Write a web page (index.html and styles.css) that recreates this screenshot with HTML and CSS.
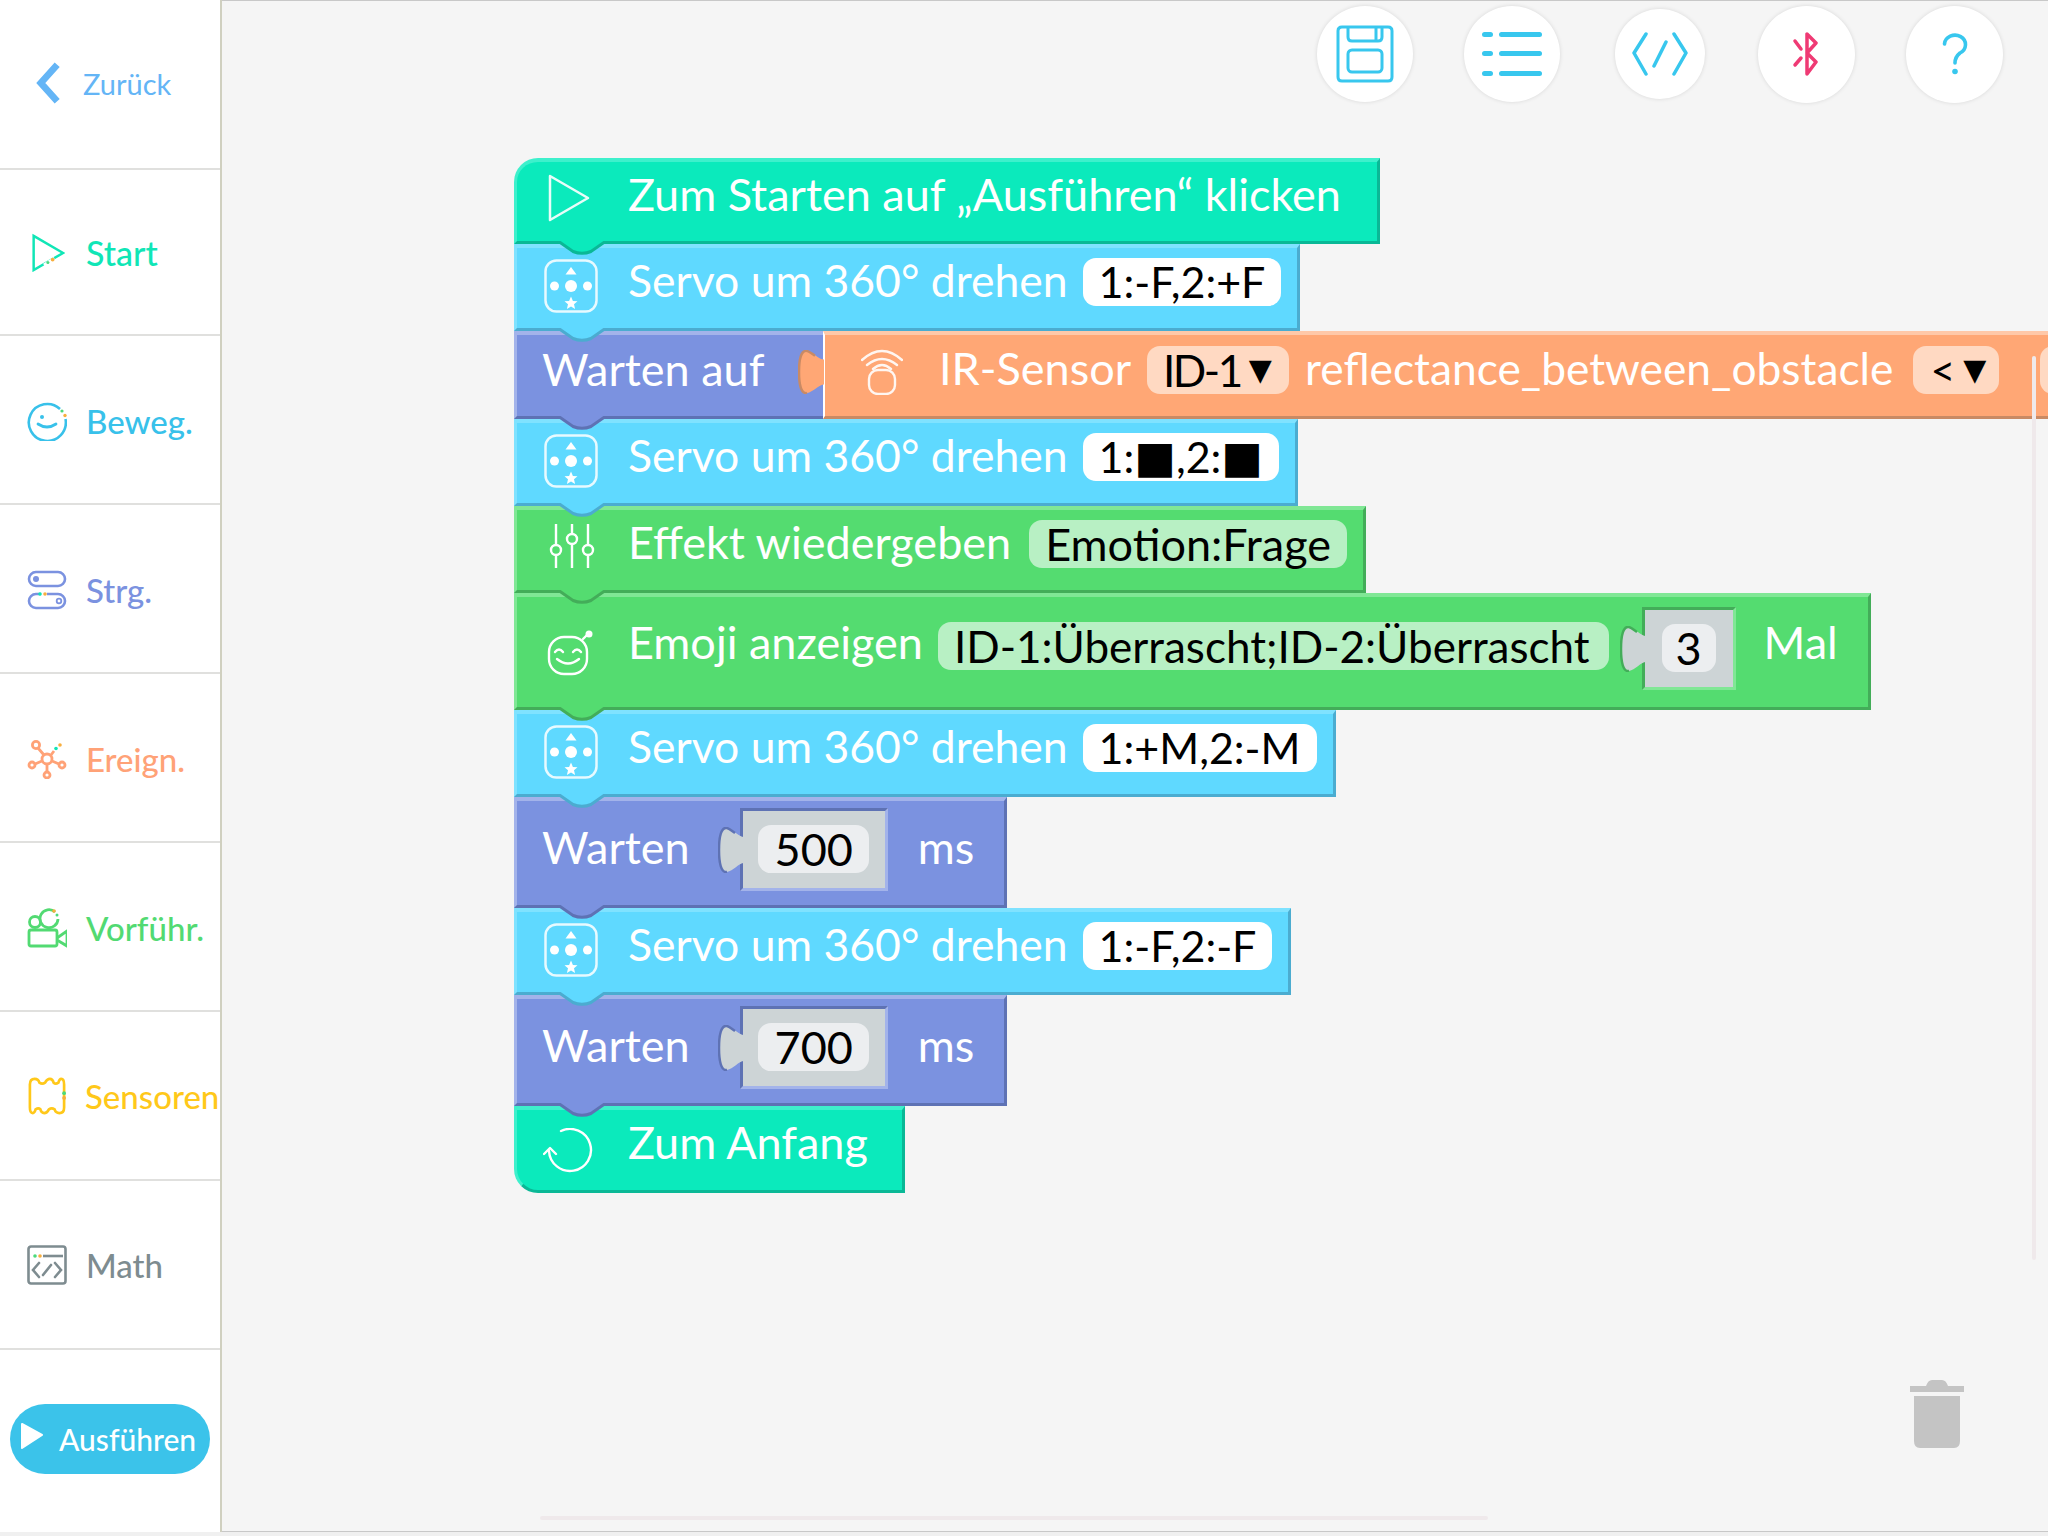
FILE: index.html
```html
<!DOCTYPE html>
<html lang="de">
<head>
    <meta charset="UTF-8">
    <title>Blöcke</title>
    <link rel="stylesheet" href="styles.css">
</head>
<body>
    <svg class="defs" width="0" height="0">
        <symbol id="notch" viewBox="0 0 48 14">
            <path class="notch-fill" d="M0 0H48L33 10.5Q24 14 15 10.5Z"/>
            <path class="notch-edge" d="M0 0L15 10.5Q24 14 33 10.5L48 0"/>
        </symbol>
        <symbol id="servo" viewBox="0 0 54 54">
            <rect x="1.5" y="1.5" width="51" height="51" rx="11" fill="none" stroke="#fff" stroke-width="2.5" opacity=".85"/>
            <circle cx="27" cy="27" r="6" fill="#fff"/>
            <circle cx="10.5" cy="27" r="4.5" fill="#fff"/>
            <circle cx="43.5" cy="27" r="4.5" fill="#fff"/>
            <path d="M27 8L32.5 15.5H21.5Z" fill="#fff"/>
            <path d="M27 37.5l1.9 4.4 4.6.4-3.5 3 1.1 4.6-4.1-2.5-4.1 2.5 1.1-4.6-3.5-3 4.6-.4Z" fill="#fff"/>
        </symbol>
        <symbol id="socket-shape" viewBox="0 0 26 46" preserveAspectRatio="none">
            <path class="socket-fill" d="M26 10C21 10 15 2 9 1C3 0 1 10 1 23S3 46 9 45C15 44 21 36 26 36Z"/>
            <path class="socket-edge" d="M17 6C14 4 12 2 9 1C3 0 1 10 1 23S3 46 9 45"/>
        </symbol>
    </svg>

    <div class="app">
        <aside class="sidebar">
            <div class="side-item side-back">
                <svg class="back-icon" viewBox="0 0 28 46"><path d="M23 4L6 23L23 42" fill="none" stroke="#64b5f6" stroke-width="7" stroke-linejoin="miter"/></svg>
                <span>Zurück</span>
            </div>
            <div class="side-item side-start">
                <svg class="side-icon" viewBox="0 0 40 40"><path d="M7 3L38 21L7 39Z" fill="none" stroke="#10e6b6" stroke-width="2.6"/><path d="M18 34l11-7" stroke="#fff" stroke-width="4"/><circle cx="27" cy="28" r="2" fill="#f7ae3e"/><circle cx="22" cy="31" r="1.6" fill="#4cd97b"/></svg>
                <span>Start</span>
            </div>
            <div class="side-item side-move">
                <svg class="side-icon" viewBox="0 0 40 40"><path d="M33 8A18.5 18.5 0 1 0 38.5 18" fill="none" stroke="#38c1ea" stroke-width="2.6"/><circle cx="15" cy="16" r="2" fill="#38c1ea"/><path d="M11 23Q20 29 29 23" fill="none" stroke="#38c1ea" stroke-width="2.8" stroke-linecap="round"/><circle cx="35" cy="10" r="1.6" fill="#4cd97b"/><circle cx="38" cy="14.500" r="1.7" fill="#f7ae3e"/></svg>
                <span>Beweg.</span>
            </div>
            <div class="side-item side-ctrl">
                <svg class="side-icon" viewBox="0 0 40 40"><rect x="2" y="2" width="36" height="14" rx="7" fill="none" stroke="#7b92e0" stroke-width="2.6"/><circle cx="9" cy="9" r="3" fill="#7b92e0"/><path d="M14 24H9A7 7 0 0 0 9 38H31A7 7 0 0 0 31 24H20" fill="none" stroke="#7b92e0" stroke-width="2.6"/><circle cx="32" cy="31" r="2.300" fill="none" stroke="#7b92e0" stroke-width="1.8"/><circle cx="13" cy="24" r="1.800" fill="#10e6b6"/><circle cx="18" cy="24" r="1.800" fill="#f7ae3e"/></svg>
                <span>Strg.</span>
            </div>
            <div class="side-item side-event">
                <svg class="side-icon" viewBox="0 0 40 40" fill="none" stroke="#ffa277" stroke-width="2.800"><circle cx="20" cy="20" r="5"/><circle cx="9" cy="6" r="3.600"/><circle cx="5" cy="26" r="3"/><circle cx="35" cy="26" r="3"/><circle cx="20" cy="36" r="3"/><path d="M11 9L17 16M8 25L15 22M32 25L25 22M20 25V33M24 16L27 12"/><circle cx="29" cy="9.500" r="1.800" fill="#10e6b6" stroke="none"/><circle cx="33" cy="6" r="1.800" fill="#f7ae3e" stroke="none"/></svg>
                <span>Ereign.</span>
            </div>
            <div class="side-item side-show">
                <svg class="side-icon" viewBox="0 0 40 40" fill="none" stroke="#52da72" stroke-width="2.800"><rect x="2" y="22" width="28" height="16" rx="2"/><circle cx="8" cy="14" r="5.500"/><path d="M28 4A9 9 0 1 0 31 11"/><path d="M30 30L40 23V38L30 32"/><circle cx="27" cy="3" r="1.800" fill="#f7ae3e" stroke="none"/><circle cx="30" cy="7" r="1.500" fill="#4cd97b" stroke="none"/></svg>
                <span>Vorführ.</span>
            </div>
            <div class="side-item side-sensor">
                <svg class="side-icon" viewBox="0 0 40 40" fill="none" stroke="#ffc81a" stroke-width="2.800"><path d="M2 8Q2 2 7 2Q11 2 12 6Q15 8 18 6Q20 2 23 2Q26 2 27 6Q29 8 32 6Q33 2 35 2Q38 2 38 8V32Q38 38 33 38Q29 38 28 34Q25 32 22 34Q20 38 17 38Q14 38 13 34Q11 32 8 34Q7 38 5 38Q2 38 2 32Z"/><circle cx="38" cy="17" r="2" fill="#4cd97b" stroke="none"/><circle cx="38" cy="22" r="2" fill="#f7ae3e" stroke="none"/></svg>
                <span>Sensoren</span>
            </div>
            <div class="side-item side-math">
                <svg class="side-icon" viewBox="0 0 40 40" fill="none" stroke="#7e8c90" stroke-width="2.600"><rect x="1.500" y="1.500" width="37" height="37" rx="2.500"/><path d="M16 11H36"/><path d="M12 18L6 25L12 32M28 18L34 25L28 32M16 30L24 20" stroke-linecap="round"/><circle cx="8" cy="11" r="1.800" fill="#4cd97b" stroke="none"/><circle cx="13" cy="11" r="1.800" fill="#f7ae3e" stroke="none"/></svg>
                <span>Math</span>
            </div>
            <div class="side-run">
                <button class="run-btn">
                    <svg class="run-icon" viewBox="0 0 24 28"><path d="M2 2L22 13L2 26Z" fill="#fff" stroke="#fff" stroke-width="2" stroke-linejoin="round"/></svg>
                    <span>Ausführen</span>
                </button>
            </div>
        </aside>

        <main class="workspace">
            <div class="toolbar">
                <div class="tool tool-save">
                    <svg viewBox="0 0 58 58" fill="none" stroke="#38c7ee" stroke-width="3"><path d="M6 2H52Q56 2 56 6V52Q56 56 52 56H6Q2 56 2 52V6Q2 2 6 2Z"/><path d="M12 2V12Q12 16 16 16H42Q46 16 46 12V2M40 2V16"/><rect x="12" y="25" width="34" height="22" rx="4"/></svg>
                </div>
                <div class="tool tool-list">
                    <svg viewBox="0 0 60 48" fill="#38c7ee"><rect x="0" y="2" width="11" height="5" rx="2.500"/><rect x="17" y="2" width="43" height="5" rx="2.500"/><rect x="0" y="21" width="11" height="5" rx="2.500"/><rect x="17" y="21" width="43" height="5" rx="2.500"/><rect x="0" y="41" width="11" height="5" rx="2.500"/><rect x="17" y="41" width="43" height="5" rx="2.500"/></svg>
                </div>
                <div class="tool tool-code">
                    <svg viewBox="0 0 56 44" fill="none" stroke="#38c7ee" stroke-width="3.500" stroke-linecap="round" stroke-linejoin="round"><path d="M14 2L2 21L14 42M42 2L54 21L42 42M34 10L22 34"/></svg>
                </div>
                <div class="tool tool-bt">
                    <svg viewBox="0 0 30 44" fill="none" stroke="#ef3a74" stroke-width="3.500" stroke-linecap="round"><path d="M15 2V42L24 30L15 21L24 11Z" stroke-linejoin="round"/><path d="M3 9L9 17M3 33L9 26"/></svg>
                </div>
                <div class="tool tool-help">
                    <svg viewBox="0 0 26 42" fill="none" stroke="#38c7ee" stroke-width="3.600" stroke-linecap="round"><path d="M2.500 11A10.500 9.500 0 1 1 18 20Q13 24 13 30"/><circle cx="13" cy="38.500" r="2.800" fill="#38c7ee" stroke="none"/></svg>
                </div>
            </div>

            <div class="stack">
                <div class="block teal block-first">
                    <svg class="notch"><use href="#notch"/></svg>
                    <svg class="bicon icon-play" viewBox="0 0 42 48"><path d="M2 2L40 24L2 46Z" fill="none" stroke="#fff" stroke-width="2.500" stroke-linejoin="round" opacity=".9"/></svg>
                    <span class="label">Zum Starten auf „Ausführen“ klicken</span>
                </div>
                <div class="block sky">
                    <svg class="notch"><use href="#notch"/></svg>
                    <svg class="bicon icon-servo"><use href="#servo"/></svg>
                    <span class="label">Servo um 360° drehen</span>
                    <span class="pill pill-servo">1:-F,2:+F</span>
                </div>
                <div class="block violet block-wait">
                    <svg class="notch"><use href="#notch"/></svg>
                    <span class="label">Warten auf</span>
                    <div class="sensor">
                        <svg class="socket"><use href="#socket-shape"/></svg>
                        <svg class="bicon icon-ir" viewBox="0 0 42 47" fill="none" stroke="#fff" stroke-width="2.400" stroke-linecap="round" opacity=".9"><path d="M1 12Q21 -6 41 12M6 17Q21 5 36 17M12 21Q21 13 30 21"/><rect x="8" y="22" width="26" height="24" rx="9"/></svg>
                        <span class="label">IR-Sensor</span>
                        <span class="pill pill-id"><span class="pill-narrow">ID-1</span><i class="caret">▼</i></span>
                        <span class="label label-long">reflectance_between_obstacle</span>
                        <span class="pill pill-lt">&lt;<i class="caret">▼</i></span>
                        <span class="pill pill-more"></span>
                    </div>
                </div>
                <div class="block sky">
                    <svg class="notch"><use href="#notch"/></svg>
                    <svg class="bicon icon-servo"><use href="#servo"/></svg>
                    <span class="label">Servo um 360° drehen</span>
                    <span class="pill pill-servo">1:<i class="square">■</i>,2:<i class="square">■</i></span>
                </div>
                <div class="block green">
                    <svg class="notch"><use href="#notch"/></svg>
                    <svg class="bicon icon-mix" viewBox="0 0 46 46" fill="none" stroke="#fff" stroke-width="2.400"><path d="M7 1V21M7 33V45M23 1V10M23 22V45M39 1V21M39 33V45"/><circle cx="7" cy="27" r="5"/><circle cx="23" cy="16" r="5"/><circle cx="39" cy="27" r="5"/></svg>
                    <span class="label">Effekt wiedergeben</span>
                    <span class="pill pill-green pill-effect">Emotion:Frage</span>
                </div>
                <div class="block green block-tall">
                    <svg class="notch"><use href="#notch"/></svg>
                    <svg class="bicon icon-emoji" viewBox="0 0 46 46" fill="none" stroke="#fff" stroke-width="2.400" stroke-linecap="round"><rect x="2" y="7" width="38" height="37" rx="15"/><path d="M8 22Q12 17 16 22M26 22Q30 17 34 22M10 29Q21 38 32 29"/><path d="M36 9L41 4"/><circle cx="42" cy="4" r="3.500" fill="#fff" stroke="none"/></svg>
                    <span class="label">Emoji anzeigen</span>
                    <span class="pill pill-green pill-emoji">ID-1:Überrascht;ID-2:Überrascht</span>
                    <div class="value value-green value-times">
                        <svg class="socket"><use href="#socket-shape"/></svg>
                        <span class="pill pill-num">3</span>
                    </div>
                    <span class="label label-mal">Mal</span>
                </div>
                <div class="block sky">
                    <svg class="notch"><use href="#notch"/></svg>
                    <svg class="bicon icon-servo"><use href="#servo"/></svg>
                    <span class="label">Servo um 360° drehen</span>
                    <span class="pill pill-servo">1:+M,2:-M</span>
                </div>
                <div class="block violet block-delay">
                    <svg class="notch"><use href="#notch"/></svg>
                    <span class="label">Warten</span>
                    <div class="value value-violet">
                        <svg class="socket"><use href="#socket-shape"/></svg>
                        <span class="pill pill-num pill-ms">500</span>
                    </div>
                    <span class="label label-ms">ms</span>
                </div>
                <div class="block sky">
                    <svg class="notch"><use href="#notch"/></svg>
                    <svg class="bicon icon-servo"><use href="#servo"/></svg>
                    <span class="label">Servo um 360° drehen</span>
                    <span class="pill pill-servo">1:-F,2:-F</span>
                </div>
                <div class="block violet block-delay">
                    <svg class="notch"><use href="#notch"/></svg>
                    <span class="label">Warten</span>
                    <div class="value value-violet">
                        <svg class="socket"><use href="#socket-shape"/></svg>
                        <span class="pill pill-num pill-ms">700</span>
                    </div>
                    <span class="label label-ms">ms</span>
                </div>
                <div class="block teal block-last">
                    <svg class="bicon icon-loop" viewBox="0 0 50 46" fill="none" stroke="#fff" stroke-width="2.400" stroke-linecap="round" stroke-linejoin="round"><path d="M18 3A21 21 0 1 1 6 23"/><path d="M1 26L7 20L13 26"/></svg>
                    <span class="label">Zum Anfang</span>
                </div>
            </div>

            <svg class="trash" viewBox="0 0 54 70"><path d="M0 7H16Q18 1 22 1H32Q36 1 38 7H54V13H0Z" fill="#c4c4c4"/><path d="M4 17H50V62Q50 69 44 69H10Q4 69 4 62Z" fill="#c4c4c4"/></svg>
            <div class="scroll-v"></div>
            <div class="scroll-h"></div>
        </main>
    </div>
</body>
</html>
```

FILE: styles.css
```css
* {
    box-sizing: border-box;
}
html, body {
    margin: 0;
    height: 100%;
    overflow: hidden;
}
body {
    background-color: #f0f0f0;
    font-family: Lato, "Noto Sans", sans-serif;
}
.defs {
    position: absolute;
}
.app {
    display: flex;
    width: 2048px;
    height: 1532px;
}

/* sidebar */
.sidebar {
    flex: 0 0 222px;
    display: flex;
    flex-direction: column;
    background-color: #fff;
    border-right: 2px solid #d0d0c0;
}
.side-item {
    flex: 0 0 169px;
    display: flex;
    align-items: center;
    gap: 19px;
    padding-left: 27px;
    font-size: 33px;
    font-weight: 500;
    white-space: nowrap;
    border-bottom: 2px solid #e0e0de;
}
.side-icon {
    flex: none;
    width: 40px;
    height: 40px;
}
.side-back {
    flex-basis: 170px;
    gap: 21px;
    padding-left: 35px;
    font-size: 29px;
    font-weight: 400;
    color: #64b5f6;
    padding-bottom: 2px;
}
.back-icon {
    width: 27px;
    height: 46px;
}
.side-start { flex-basis: 166px; color: #10e6b6; gap: 21px; font-size: 34px; }
.side-start .side-icon { width: 38px; height: 40px; }
.side-move { color: #38c1ea; padding-top: 2px; }
.side-ctrl { color: #7b92e0; padding-top: 2px; }
.side-event { color: #ffa277; padding-top: 2px; }
.side-show { color: #52da72; padding-top: 2px; }
.side-sensor { color: #ffc81a; padding-left: 28px; }
.side-sensor .side-icon { width: 38px; }
.side-math { color: #7e8c90; }
.side-run {
    flex: 1;
    display: flex;
    align-items: center;
    justify-content: center;
    padding-bottom: 4px;
}
.run-btn {
    display: flex;
    align-items: center;
    gap: 15px;
    width: 200px;
    height: 70px;
    padding: 0 0 0 10px;
    border: none;
    border-radius: 35px;
    background-color: #3bc3ea;
    color: #fff;
    font-family: inherit;
    font-size: 30px;
    font-weight: 500;
}
.run-icon {
    width: 24px;
    height: 28px;
    margin-top: -6px;
}

/* workspace */
.workspace {
    position: relative;
    flex: 1;
    min-width: 0;
    overflow: hidden;
    background-color: #f5f5f5;
    border-top: 1px solid #c8c8c8;
    border-bottom: 1px solid #c8c8c8;
    padding-left: 292px;
}
.toolbar {
    display: flex;
    align-items: center;
    height: 106px;
    margin-left: 803px;
    margin-bottom: 51px;
    gap: 51px;
}
.tool {
    flex: none;
    width: 96px;
    height: 96px;
    display: flex;
    align-items: center;
    justify-content: center;
    border-radius: 50%;
    background-color: #fff;
    box-shadow: 0 0 4px rgba(0,0,0,0.12);
}
.tool-code { width: 90px; height: 90px; margin: 0 2px 0 4px; }
.tool-bt { width: 97px; height: 97px; }
.tool-help { width: 97px; height: 97px; }
.tool-save svg { width: 58px; height: 58px; }
.tool-list svg { width: 60px; height: 48px; }
.tool-code svg { width: 56px; height: 44px; }
.tool-bt svg { width: 30px; height: 44px; }
.tool-help svg { width: 26px; height: 42px; }

/* block stack */
.stack {
    display: flex;
    flex-direction: column;
    align-items: flex-start;
}
.block {
    --fill: #5fd9ff;
    --light: #7fe2ff;
    --dark: #4bacd0;
    position: relative;
    display: flex;
    align-items: center;
    height: 87px;
    padding: 0 16px 7px 111px;
    background-color: var(--fill);
    border-top: 4px solid var(--light);
    border-left: 3px solid var(--light);
    border-right: 3px solid var(--dark);
    border-bottom: 3px solid var(--dark);
    color: #fff;
    font-size: 45px;
    white-space: nowrap;
}
.teal { --fill: #0beabc; --light: #3ef0cc; --dark: #0ab896; }
.sky { --fill: #5fd9ff; --light: #7fe2ff; --dark: #4bacd0; }
.violet { --fill: #7b92e0; --light: #a3b3ea; --dark: #5e72b4; }
.green { --fill: #54dc70; --light: #80e795; --dark: #43ad59; }
.sky .label { font-size: 44.5px; }
.block-first {
    height: 86px;
    border-top-left-radius: 24px;
    padding-right: 36px;
}
.block-last {
    border-bottom-left-radius: 24px;
    padding-right: 34px;
}
.block-wait {
    width: 2000px;
    padding-left: 25px;
    height: 88px;
    padding-right: 0;
    padding-bottom: 0;
    align-items: stretch;
}
.block-wait > .label {
    align-self: center;
    margin-bottom: 13px;
    flex: 0 0 281px;
}
.block-tall { height: 117px; padding-right: 30px; padding-bottom: 8px; }
.block-tall .label { margin-bottom: 12px; }
.block-delay { height: 111px; padding-left: 25px; padding-bottom: 8px; padding-right: 30px; }
.notch {
    position: absolute;
    z-index: 2;
    left: 40px;
    bottom: -14px;
    width: 50px;
    height: 14px;
    overflow: visible;
}
.notch-fill { fill: var(--fill); }
.notch-edge { fill: none; stroke: var(--dark); stroke-width: 3; }
.label {
    flex: none;
    line-height: 1;
    margin-bottom: 8px;
}
.block-delay .label { margin-bottom: 4px; }
.bicon {
    position: absolute;
    left: 30px;
    top: 50%;
}
.icon-play { left: 31px; width: 42px; height: 48px; margin-top: -28px; }
.icon-servo { left: 27px; width: 54px; height: 54px; margin-top: -29px; }
.icon-mix { left: 32px; width: 46px; height: 46px; margin-top: -27px; }
.icon-emoji { left: 30px; width: 46px; height: 46px; margin-top: -22px; }
.icon-loop { left: 26px; width: 50px; height: 46px; margin-top: -22px; }
.icon-ir { position: static; flex: none; width: 42px; height: 47px; margin: 0 36px 2px 36px; }
.pill {
    flex: none;
    display: flex;
    align-items: center;
    height: 48px;
    padding: 0 16px;
    margin-left: 15px;
    margin-bottom: 5px;
    border-radius: 13px;
    background-color: #fff;
    color: #000;
    font-size: 43px;
    line-height: 48px;
}
.pill-green { background-color: #b8f0c4; }
.pill-effect { font-size: 45px; margin-left: 18px; }
.pill-emoji { margin-left: 15px; padding-right: 19px; font-size: 44px; }
.square {
    font-style: normal;
    font-family: "DejaVu Sans", sans-serif;
    font-size: 44px;
}

/* attached sensor block */
.sensor {
    --fill: #ffa775;
    --light: #ffc8a8;
    --dark: #c98a64;
    position: relative;
    flex: none;
    display: flex;
    align-items: center;
    width: 1300px;
    margin: -4px 0 -3px 0;
    background-color: var(--fill);
    border-top: 4px solid var(--light);
    border-bottom: 3px solid var(--dark);
    border-left: 2px solid #fff;
    padding-bottom: 7px;
}
.sensor .socket {
    top: 15px;
    left: -27px;
    height: 44px;
}
.sensor .socket-edge { stroke: #5e72b4; }
.label-long { font-size: 44.3px; }
.pill-id, .pill-lt {
    background-color: #ffd9c2;
}
.pill-narrow {
    font-size: 44px;
    letter-spacing: -2.5px;
}
.pill-id { margin-left: 16px; margin-right: 16px; padding: 0 0 0 16px; width: 142px; }
.pill-lt { margin-left: 20px; padding: 0 0 0 17px; width: 86px; }
.pill-more { margin-left: 41px; width: 60px; background-color: #ffd9c2; padding: 0; }
.caret {
    font-style: normal;
    font-family: "DejaVu Sans", sans-serif;
    font-size: 30px;
    margin-left: 8px;
}

/* value inputs */
.value {
    position: relative;
    flex: none;
    display: flex;
    align-items: center;
    justify-content: center;
    height: 83px;
    background-color: #cdd4d6;
    border-top: 3px solid var(--dark);
    border-left: 3px solid var(--dark);
    border-right: 3px solid var(--light);
    border-bottom: 3px solid var(--light);
}
.value-times {
    width: 94px;
    margin-left: 33px;
    --fill: #cdd4d6;
}
.value-violet {
    width: 148px;
    margin-left: 50px;
    --fill: #cdd4d6;
}
.socket {
    position: absolute;
    top: 16px;
    left: -25px;
    width: 26px;
    height: 46px;
    overflow: visible;
}
.socket-fill { fill: var(--fill); }
.socket-edge { fill: none; stroke: var(--dark); stroke-width: 2.5; }
.value-times .socket-edge { stroke: #43ad59; }
.value-violet .socket-edge { stroke: #5e72b4; }
.pill-num {
    margin: 0;
    padding: 0;
    width: 54px;
    justify-content: center;
    background-color: #eceef0;
    font-size: 45px;
}
.pill-ms { width: 111px; }
.label-mal { margin-left: 28px; }
.label-ms { margin-left: 30px; }

/* trash and scroll hints */
.trash {
    position: absolute;
    right: 84px;
    bottom: 82px;
    width: 54px;
    height: 70px;
}
.scroll-v {
    position: absolute;
    z-index: 3;
    top: 355px;
    right: 12px;
    width: 4px;
    height: 904px;
    border-radius: 2px;
    background-color: #efe9eb;
}
.scroll-h {
    position: absolute;
    left: 318px;
    bottom: 11px;
    width: 948px;
    height: 4px;
    border-radius: 2px;
    background-color: #efe9eb;
}
```
